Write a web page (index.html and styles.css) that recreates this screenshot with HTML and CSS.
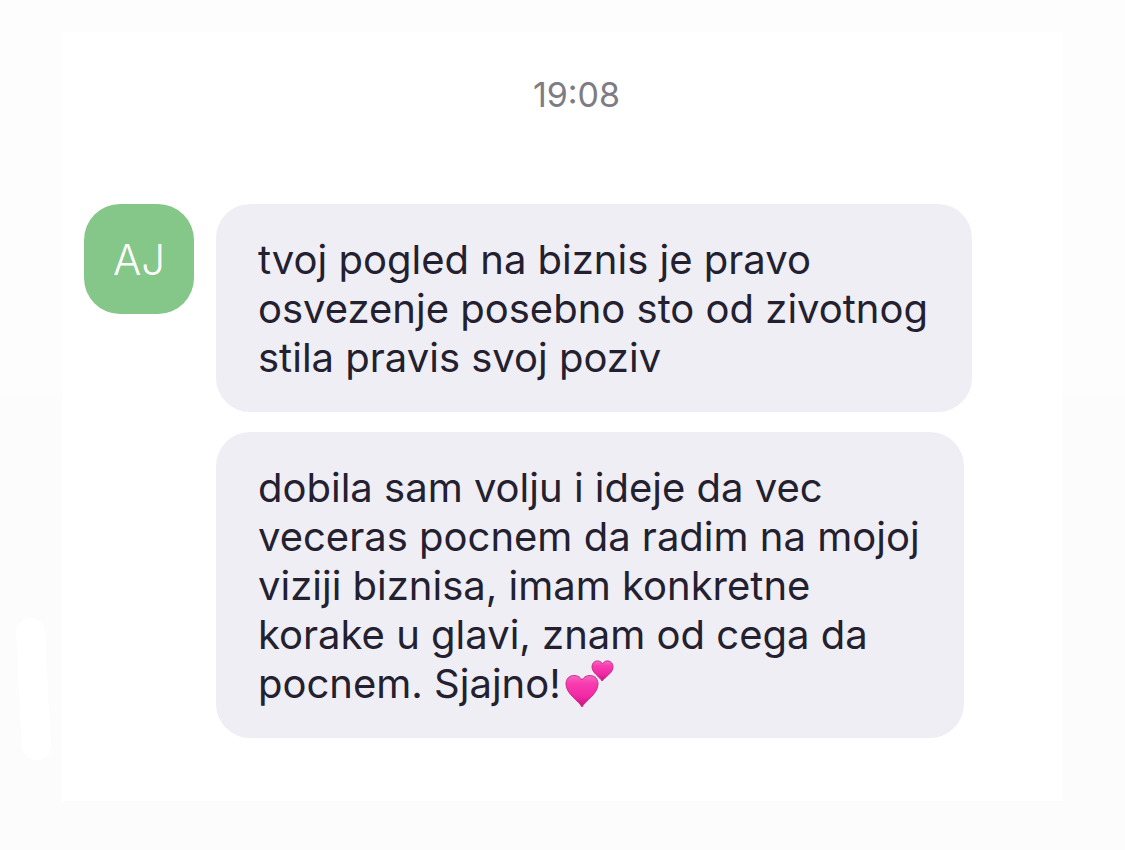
FILE: index.html
```html
<!DOCTYPE html>
<html lang="sr-Latn">
<head>
	<meta charset="utf-8">
	<meta name="viewport" content="width=device-width, initial-scale=1">
	<title>Chat</title>
	<link rel="stylesheet" href="styles.css">
</head>
<body>
	<span class="streak"></span>
	<main class="chat">
		<time class="time" datetime="19:08">19:08</time>
		<div class="thread">
			<div class="avatar">AJ</div>
			<div class="messages">
				<p class="bubble">tvoj pogled na biznis je pravo<br>osvezenje posebno sto od zivotnog<br>stila pravis svoj poziv</p>
				<p class="bubble">dobila sam volju i ideje da vec<br>veceras pocnem da radim na mojoj<br>viziji biznisa, imam konkretne<br>korake u glavi, znam od cega da<br>pocnem. Sjajno!<svg class="hearts" viewBox="0 0 48 48" role="img" aria-label="two hearts">
					<defs>
						<linearGradient id="pink" x1="0" y1="0" x2="0" y2="1">
							<stop offset="0" stop-color="#f06cc0"/>
							<stop offset="0.25" stop-color="#f93cb0"/>
							<stop offset="0.65" stop-color="#f02aa4"/>
							<stop offset="1" stop-color="#c4147c"/>
						</linearGradient>
					</defs>
					<path fill="url(#pink)" stroke="#cf2a8c" d="M17 47C14 41 1 34 1 24C1 14 13 13 17 20C21 13 33 14 33 24C33 34 20 41 17 47Z"/>
					<path fill="url(#pink)" stroke="#cf2a8c" d="M37 21C35 17 27 13 27 7C27 0 35 -1 37.500 4C40 -1 48 0 48 7C48 13 40 17 37 21Z"/>
				</svg></p>
			</div>
		</div>
	</main>
</body>
</html>
```
FILE: styles.css
```css
* {
	box-sizing: border-box;
}

body {
	background: linear-gradient(#fdfdfd 396px, #fcfcfc 396px);
	color: #23202f;
	font-family: Inter, "Liberation Sans", sans-serif;
	margin: 0;
	min-height: 100vh;
	padding: 32px 62px 48px;
}

.chat {
	background-color: #fff;
	padding: 40px 22px 63px;
}

.time {
	color: #7d7c84;
	display: block;
	font-size: 34px;
	line-height: 46px;
	padding-left: 28px;
	text-align: center;
}

.thread {
	align-items: flex-start;
	display: flex;
	gap: 22px;
	margin-top: 86px;
}

.avatar {
	background-color: #84c788;
	border-radius: 36px;
	color: #fff;
	flex: none;
	font-size: 42px;
	font-weight: 300;
	height: 110px;
	line-height: 112px;
	text-align: center;
	width: 110px;
}

.messages {
	align-items: flex-start;
	display: flex;
	flex-direction: column;
	gap: 20px;
}

.bubble {
	background-color: #f0eef5;
	border-radius: 34px;
	font-size: 40px;
	line-height: 49px;
	margin: 0;
	padding: 31px 44px 30px 42px;
}

.hearts {
	height: 48px;
	margin-left: 4px;
	overflow: visible;
	vertical-align: -10px;
	width: 48px;
}

.streak {
	background-color: #fff;
	border-radius: 14px;
	height: 142px;
	left: 19px;
	position: absolute;
	top: 618px;
	transform: rotate(-3deg);
	width: 29px;
}
```
